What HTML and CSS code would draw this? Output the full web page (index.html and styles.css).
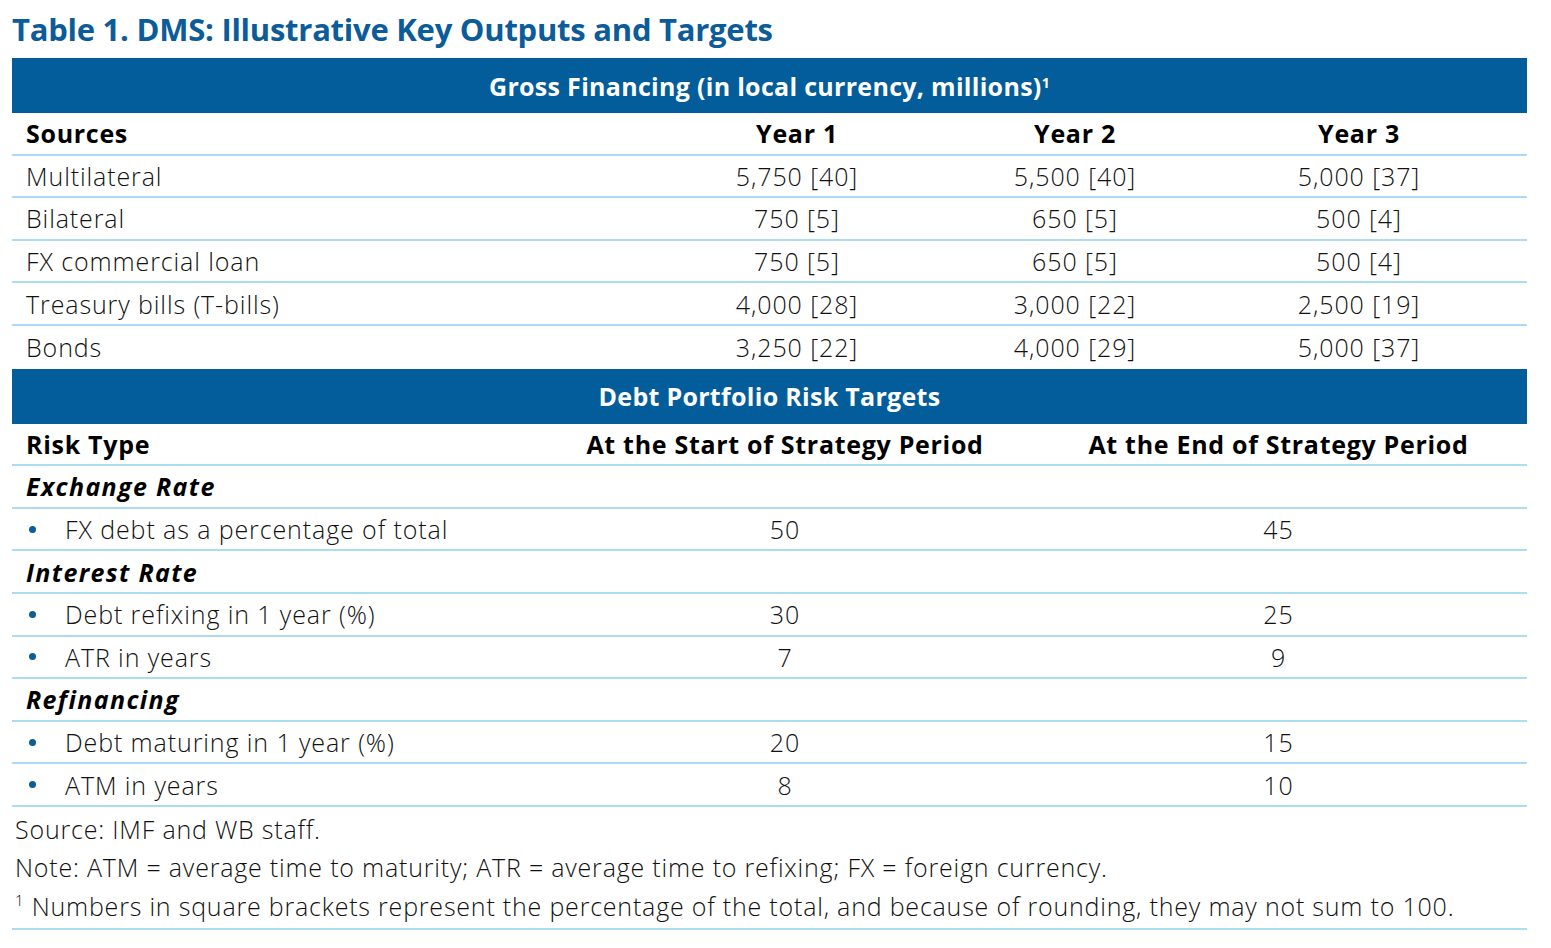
FILE: index.html
```html
<!DOCTYPE html>
<html lang="en">
<head>
<meta charset="utf-8">
<title>Table 1. DMS: Illustrative Key Outputs and Targets</title>
<link rel="stylesheet" href="styles.css">
</head>
<body>
<div class="page">
  <h1 class="title">Table 1. DMS: Illustrative Key Outputs and Targets</h1>

  <div class="band">Gross Financing (in local currency, millions)<sup>1</sup></div>
  <div class="grid fin head">
    <div class="lbl">Sources</div><div class="c">Year 1</div><div class="c">Year 2</div><div class="c">Year 3</div><div></div>
  </div>
  <div class="grid fin">
    <div class="lbl">Multilateral</div><div class="c">5,750 [40]</div><div class="c">5,500 [40]</div><div class="c">5,000 [37]</div><div></div>
  </div>
  <div class="grid fin">
    <div class="lbl">Bilateral</div><div class="c">750 [5]</div><div class="c">650 [5]</div><div class="c">500 [4]</div><div></div>
  </div>
  <div class="grid fin">
    <div class="lbl">FX commercial loan</div><div class="c">750 [5]</div><div class="c">650 [5]</div><div class="c">500 [4]</div><div></div>
  </div>
  <div class="grid fin">
    <div class="lbl">Treasury bills (T-bills)</div><div class="c">4,000 [28]</div><div class="c">3,000 [22]</div><div class="c">2,500 [19]</div><div></div>
  </div>
  <div class="grid fin last">
    <div class="lbl">Bonds</div><div class="c">3,250 [22]</div><div class="c">4,000 [29]</div><div class="c">5,000 [37]</div><div></div>
  </div>

  <div class="band">Debt Portfolio Risk Targets</div>
  <div class="grid risk head">
    <div class="lbl">Risk Type</div><div class="c">At the Start of Strategy Period</div><div class="c">At the End of Strategy Period</div>
  </div>
  <div class="grid risk">
    <div class="lbl cat">Exchange Rate</div><div></div><div></div>
  </div>
  <div class="grid risk">
    <div class="lbl item"><span class="dot"></span>FX debt as a percentage of total</div><div class="c">50</div><div class="c">45</div>
  </div>
  <div class="grid risk">
    <div class="lbl cat">Interest Rate</div><div></div><div></div>
  </div>
  <div class="grid risk">
    <div class="lbl item"><span class="dot"></span>Debt refixing in 1 year (%)</div><div class="c">30</div><div class="c">25</div>
  </div>
  <div class="grid risk">
    <div class="lbl item"><span class="dot"></span>ATR in years</div><div class="c">7</div><div class="c">9</div>
  </div>
  <div class="grid risk">
    <div class="lbl cat">Refinancing</div><div></div><div></div>
  </div>
  <div class="grid risk">
    <div class="lbl item"><span class="dot"></span>Debt maturing in 1 year (%)</div><div class="c">20</div><div class="c">15</div>
  </div>
  <div class="grid risk">
    <div class="lbl item"><span class="dot"></span>ATM in years</div><div class="c">8</div><div class="c">10</div>
  </div>

  <div class="notes">
    <p>Source: IMF and WB staff.</p>
    <p>Note: ATM = average time to maturity; ATR = average time to refixing; FX = foreign currency.</p>
    <p><sup>1</sup> Numbers in square brackets represent the percentage of the total, and because of rounding, they may not sum to 100.</p>
  </div>
</div>
</body>
</html>
```

FILE: styles.css
```css
* { box-sizing: border-box; }
html, body { margin: 0; padding: 0; background: #ffffff; }
body {
  font-family: "Open Sans", "Liberation Sans", sans-serif;
  color: #111;
}
.page {
  width: 1515px;
  margin-left: 12px;
  padding-top: 10px;
}
.title {
  margin: 0;
  height: 48px;
  font-size: 31px;
  font-weight: 700;
  color: #0b5c99;
  line-height: 38px;
  letter-spacing: -0.25px;
}
.band {
  height: 55px;
  background: #035d9b;
  color: #fff;
  font-weight: 700;
  font-size: 25px;
  display: flex;
  align-items: center;
  justify-content: center;
  letter-spacing: 0.3px;
}
.band sup { font-size: 14px; line-height: 0; position: relative; top: -3px; vertical-align: super; }
.grid {
  display: grid;
  height: 42.6px;
  align-items: center;
  border-bottom: 2px solid #abdcf4;
  font-size: 25px;
  font-weight: 300;
  letter-spacing: 0.9px;
}
.grid.last { border-bottom: none; }
.fin { grid-template-columns: 642px 286px 270px 298px 1fr; }
.risk { grid-template-columns: 528px 490px 1fr; }
.head { font-weight: 700; letter-spacing: 0.7px; color: #000; }
.lbl { padding-left: 14px; white-space: nowrap; }
.c { text-align: center; white-space: nowrap; }
.cat { font-weight: 700; font-style: italic; letter-spacing: 1.35px; color: #000; }
.item { display: flex; align-items: center; padding-left: 17px; }
.dot {
  width: 7px; height: 7px; border-radius: 50%;
  background: #0b5c99;
  margin-right: 29px;
  flex: none;
}
.notes {
  border-bottom: 2px solid #abdcf4;
  padding: 3px 0 3px 3px;
  font-size: 25px;
  font-weight: 300;
  letter-spacing: 0.8px;
}
.notes p { margin: 0; line-height: 38.5px; }
.notes sup { font-size: 15px; line-height: 0; vertical-align: super; position: relative; top: -1px; }
```
